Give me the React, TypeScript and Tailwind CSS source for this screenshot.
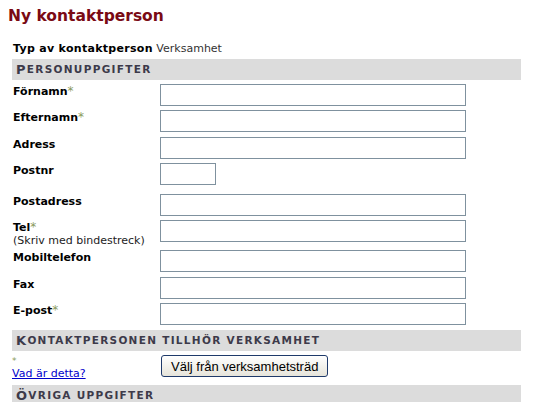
import React from 'react';

const font = { fontFamily: '"DejaVu Sans", Verdana, sans-serif' };

type Row = { label: string; req?: boolean; note?: string; short?: boolean; h: string };

const ROWS: Row[] = [
    { label: 'Förnamn', req: true, h: 'h-[26px]' },
    { label: 'Efternamn', req: true, h: 'h-[27px]' },
    { label: 'Adress', h: 'h-[26px]' },
    { label: 'Postnr', short: true, h: 'h-[31px]' },
    { label: 'Postadress', h: 'h-[26px]' },
    { label: 'Tel', req: true, note: '(Skriv med bindestreck)', h: 'h-[30px]' },
    { label: 'Mobiltelefon', h: 'h-[27px]' },
    { label: 'Fax', h: 'h-[26px]' },
    { label: 'E-post', req: true, h: 'h-[27px]' },
];

function SectionBar({ first, rest }: { first: string; rest: string }) {
    return (
        <div className="h-[21px] w-[509px] bg-[#dcdcdc] pl-[4px] flex items-center font-bold tracking-[1.3px] text-[#3d3a4a] leading-none">
            <span className="text-[13px]">{first}</span>
            <span className="text-[10.5px]">{rest}</span>
        </div>
    );
}

export default function App() {
    return (
        <div className="min-h-screen bg-white text-black" style={font}>
            <div className="pl-[8px] pt-[6px]">
                <h1 className="text-[15.5px] font-bold text-[#7a0a14] leading-[20px]">Ny kontaktperson</h1>
            </div>

            <div className="pl-[12px] pt-[16px]">
                <div className="text-[11px] leading-[14px] pl-[1px] mb-[3px]">
                    <span className="font-bold tracking-[0.3px]">Typ av kontaktperson</span>{' '}
                    <span className="text-[#333]">Verksamhet</span>
                </div>

                <SectionBar first="P" rest="ERSONUPPGIFTER" />

                <div className="pt-[4px]">
                    {ROWS.map((r) => (
                        <div key={r.label} className={`flex ${r.h}`}>
                            <div className="w-[148px] pl-[1px] pt-[1px] text-[11px] leading-[13px]">
                                <span className="font-bold">{r.label}</span>
                                {r.req && <span className="text-[#8a9a5b] text-[12px]">*</span>}
                                {r.note && <div className="text-[#222]">{r.note}</div>}
                            </div>
                            <input
                                type="text"
                                className={`h-[22px] border border-[#7f919e] bg-white outline-none ${r.short ? 'w-[56px]' : 'w-[306px]'}`}
                            />
                        </div>
                    ))}
                </div>

                <SectionBar first="K" rest="ONTAKTPERSONEN TILLHÖR VERKSAMHET" />

                <div className="flex h-[34px] pt-[4px]">
                    <div className="w-[148px] text-[11px] leading-[13px]">
                        <div className="text-[#8a9a5b] text-[9px] leading-[12px]">*</div>
                        <a href="#" className="text-[#0000cc] underline">Vad är detta?</a>
                    </div>
                    <button
                        className="ml-[1px] h-[22px] px-[9px] rounded-[3px] border border-[#1f3a6a] bg-gradient-to-b from-white to-[#e6e4da] text-[13px] text-black leading-none"
                        style={{ fontFamily: '"Liberation Sans", Arial, sans-serif' }}
                    >
                        Välj från verksamhetsträd
                    </button>
                </div>

                <SectionBar first="Ö" rest="VRIGA UPPGIFTER" />
            </div>
        </div>
    );
}
